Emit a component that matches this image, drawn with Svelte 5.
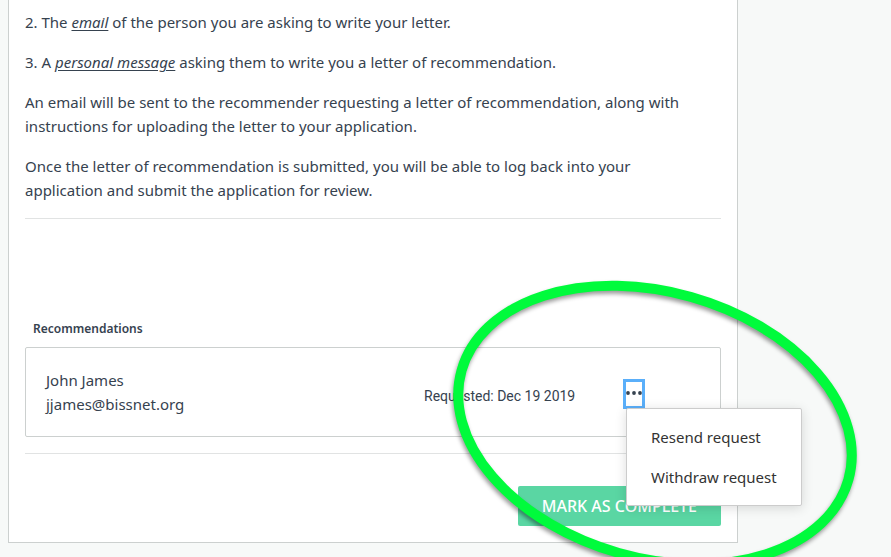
<script lang="ts">
  interface Recommendation { name: string; email: string; requested: string }

  const recommendations: Recommendation[] = [
    { name: 'John James', email: 'jjames@bissnet.org', requested: 'Dec 19 2019' },
  ];
  const actions = ['Resend request', 'Withdraw request'];

  let openRow = $state<number | null>(0);

  function toggle(i: number) {
    openRow = openRow === i ? null : i;
  }
</script>

<div class="page">
  <main class="card">
    <section class="instructions">
      <p>2. The <em>email</em> of the person you are asking to write your letter.</p>
      <p>3. A <em>personal message</em> asking them to write you a letter of recommendation.</p>
      <p>
        An email will be sent to the recommender requesting a letter of recommendation, along with
        instructions for uploading the letter to your application.
      </p>
      <p>
        Once the letter of recommendation is submitted, you will be able to log back into your
        application and submit the application for review.
      </p>
    </section>

    <section class="recommendations">
      <h2>Recommendations</h2>
      {#each recommendations as rec, i}
        <div class="row">
          <div class="person">
            <div>{rec.name}</div>
            <div>{rec.email}</div>
          </div>
          <div class="date">Requested: {rec.requested}</div>
          <div class="menu-wrap">
            <button
              class="more"
              class:active={openRow === i}
              type="button"
              aria-label="More actions"
              aria-expanded={openRow === i}
              onclick={() => toggle(i)}
            >
              <svg width="16" height="6" viewBox="0 0 16 6" aria-hidden="true">
                <circle cx="2" cy="3" r="1.9" />
                <circle cx="8" cy="3" r="1.9" />
                <circle cx="14" cy="3" r="1.9" />
              </svg>
            </button>
            {#if openRow === i}
              <div class="menu">
                {#each actions as action}
                  <button type="button" onclick={() => toggle(i)}>{action}</button>
                {/each}
              </div>
            {/if}
          </div>
        </div>
      {/each}
    </section>

    <footer>
      <button class="complete" type="button">MARK AS COMPLETE</button>
    </footer>

    <svg class="highlight" width="430" height="310" viewBox="0 0 430 310" aria-hidden="true">
      <ellipse cx="215" cy="155" rx="201" ry="133" transform="rotate(15.8 215 155)" />
    </svg>
  </main>
</div>

<style>
  :global(body) {
    margin: 0;
    background: #f7f9f8;
  }
  .page {
    min-height: 100vh;
    box-sizing: border-box;
    padding: 0 8px 14px;
    overflow: hidden;
    font-family: 'Noto Sans', 'Open Sans', sans-serif;
    font-size: 15px;
    line-height: 24px;
    color: #36424f;
  }
  .card {
    position: relative;
    box-sizing: border-box;
    max-width: 730px;
    padding: 10px 16px 16px;
    background: #fff;
    border: 1px solid #ccd0cf;
    border-top: 0;
  }
  .instructions {
    padding: 0 24px 16px 0;
    border-bottom: 1px solid #e1e3e3;
  }
  p {
    margin: 0 0 16px;
  }
  p:last-child {
    margin-bottom: 0;
  }
  em {
    text-decoration: underline;
    text-underline-offset: 2px;
  }
  .recommendations {
    padding: 98px 0 16px;
    border-bottom: 1px solid #e1e3e3;
  }
  h2 {
    margin: 0 8px 6px;
    font-size: 12px;
    font-weight: 600;
    line-height: 24px;
  }
  .row {
    display: grid;
    grid-template-columns: 1fr 199px 77px;
    align-items: center;
    padding: 20px;
    border: 1px solid #ccd0cf;
    border-radius: 2px;
  }
  .date {
    padding-top: 8px;
    font-family: Roboto, sans-serif;
    font-size: 14px;
  }
  .menu-wrap {
    position: relative;
    justify-self: start;
    margin-top: 4px;
  }
  button {
    margin: 0;
    border: 0;
    background: none;
    font: inherit;
    color: inherit;
    cursor: pointer;
  }
  .more {
    display: flex;
    align-items: center;
    justify-content: center;
    box-sizing: border-box;
    width: 22px;
    height: 30px;
    padding: 0 0 2px;
    border: 3px solid transparent;
  }
  .more.active {
    border-color: #5aaffa;
  }
  .more svg {
    flex: none;
    fill: #36424f;
  }
  .menu {
    position: absolute;
    top: 29px;
    left: 3px;
    z-index: 1;
    padding: 8px 0;
    background: #fff;
    border: 1px solid #ccc;
    border-radius: 2px;
    box-shadow: 0 2px 12px rgba(0, 0, 0, 0.14);
    color: #333;
  }
  .menu button {
    display: block;
    width: 100%;
    padding: 8px 24px;
    text-align: left;
    white-space: nowrap;
  }
  footer {
    display: flex;
    justify-content: flex-end;
    padding-top: 32px;
  }
  .complete {
    padding: 8px 24px;
    border-radius: 2px;
    background: #5ad6a3;
    font-size: 16px;
    font-weight: 500;
    color: #fff;
  }
  .highlight {
    position: absolute;
    top: 270px;
    right: -133px;
    z-index: 2;
    pointer-events: none;
    overflow: visible;
    filter: drop-shadow(-1px 3px 2px rgba(0, 0, 0, 0.4));
  }
  .highlight ellipse {
    fill: none;
    stroke: #00fb3c;
    stroke-width: 10;
  }
</style>
